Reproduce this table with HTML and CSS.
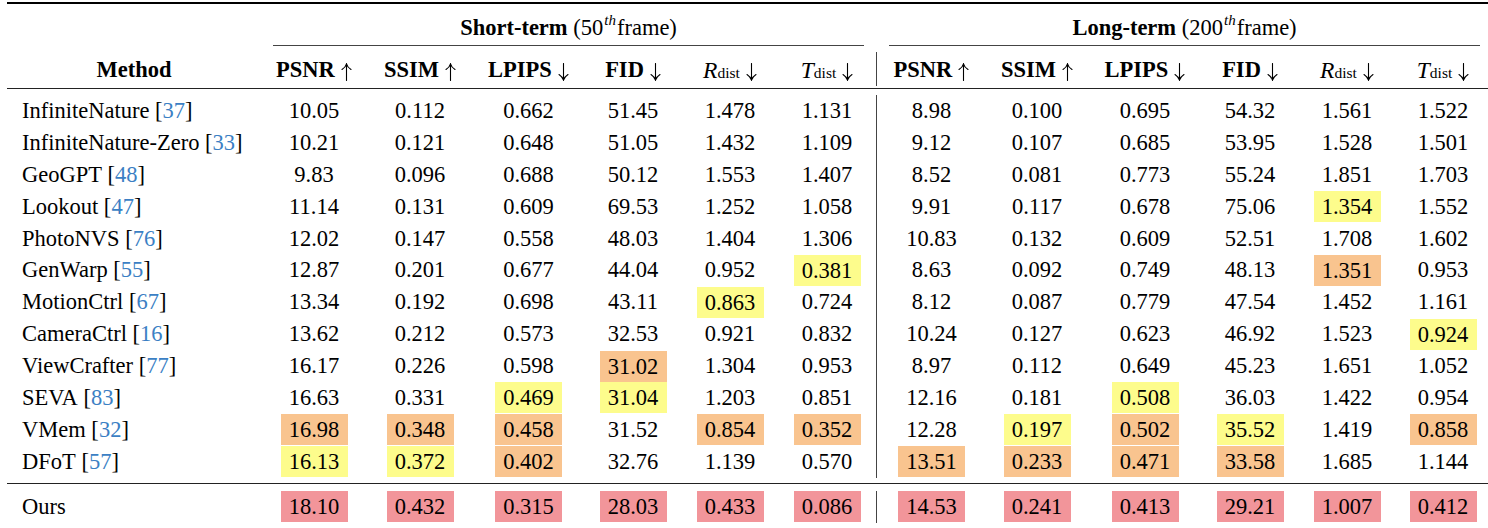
FILE: index.html
```html
<!DOCTYPE html>
<html>
<head>
<meta charset="utf-8">
<title>Comparison table</title>
<link rel="stylesheet" href="styles.css">
</head>
<body>
<div class="tbl">
  <div class="rule top"></div>

  <div class="hblank"></div>
  <div class="group short"><div class="cmid"><b>Short-term</b> (50<sup class="th">th</sup>frame)</div></div>
  <div class="group long"><div class="cmid"><b>Long-term</b> (200<sup class="th">th</sup>frame)</div></div>

  <div class="spacer s6"></div>

  <div class="row head">
    <div class="cell hm"><b>Method</b></div>
    <div class="cell"><b>PSNR</b><svg class="ar" viewBox="0 0 11 18"><path d="M5.5 17.5V1.2M1 6.5Q4.6 4.2 5.5 0.8Q6.4 4.2 10 6.5"/></svg></div>
    <div class="cell"><b>SSIM</b><svg class="ar" viewBox="0 0 11 18"><path d="M5.5 17.5V1.2M1 6.5Q4.6 4.2 5.5 0.8Q6.4 4.2 10 6.5"/></svg></div>
    <div class="cell"><b>LPIPS</b><svg class="ar" viewBox="0 0 11 18"><path d="M5.5 0.5V16.8M1 11.5Q4.6 13.8 5.5 17.2Q6.4 13.8 10 11.5"/></svg></div>
    <div class="cell"><b>FID</b><svg class="ar" viewBox="0 0 11 18"><path d="M5.5 0.5V16.8M1 11.5Q4.6 13.8 5.5 17.2Q6.4 13.8 10 11.5"/></svg></div>
    <div class="cell"><i class="mi">R</i><sub>dist</sub><svg class="ar" viewBox="0 0 11 18"><path d="M5.5 0.5V16.8M1 11.5Q4.6 13.8 5.5 17.2Q6.4 13.8 10 11.5"/></svg></div>
    <div class="cell"><i class="mi">T</i><sub>dist</sub><svg class="ar" viewBox="0 0 11 18"><path d="M5.5 0.5V16.8M1 11.5Q4.6 13.8 5.5 17.2Q6.4 13.8 10 11.5"/></svg></div>
    <div class="cell sep"><b>PSNR</b><svg class="ar" viewBox="0 0 11 18"><path d="M5.5 17.5V1.2M1 6.5Q4.6 4.2 5.5 0.8Q6.4 4.2 10 6.5"/></svg></div>
    <div class="cell"><b>SSIM</b><svg class="ar" viewBox="0 0 11 18"><path d="M5.5 17.5V1.2M1 6.5Q4.6 4.2 5.5 0.8Q6.4 4.2 10 6.5"/></svg></div>
    <div class="cell"><b>LPIPS</b><svg class="ar" viewBox="0 0 11 18"><path d="M5.5 0.5V16.8M1 11.5Q4.6 13.8 5.5 17.2Q6.4 13.8 10 11.5"/></svg></div>
    <div class="cell"><b>FID</b><svg class="ar" viewBox="0 0 11 18"><path d="M5.5 0.5V16.8M1 11.5Q4.6 13.8 5.5 17.2Q6.4 13.8 10 11.5"/></svg></div>
    <div class="cell"><i class="mi">R</i><sub>dist</sub><svg class="ar" viewBox="0 0 11 18"><path d="M5.5 0.5V16.8M1 11.5Q4.6 13.8 5.5 17.2Q6.4 13.8 10 11.5"/></svg></div>
    <div class="cell"><i class="mi">T</i><sub>dist</sub><svg class="ar" viewBox="0 0 11 18"><path d="M5.5 0.5V16.8M1 11.5Q4.6 13.8 5.5 17.2Q6.4 13.8 10 11.5"/></svg></div>
  </div>

  <div class="spacer s2"></div>
  <div class="rule mid"></div>
  <div class="spacer s6"></div>

  <div class="row">
    <div class="cell m">InfiniteNature&nbsp;[<span class="cite">37</span>]</div>
    <div class="cell">10.05</div><div class="cell">0.112</div><div class="cell">0.662</div><div class="cell">51.45</div><div class="cell">1.478</div><div class="cell">1.131</div>
    <div class="cell sep">8.98</div><div class="cell">0.100</div><div class="cell">0.695</div><div class="cell">54.32</div><div class="cell">1.561</div><div class="cell">1.522</div>
  </div>
  <div class="row">
    <div class="cell m">InfiniteNature-Zero&nbsp;[<span class="cite">33</span>]</div>
    <div class="cell">10.21</div><div class="cell">0.121</div><div class="cell">0.648</div><div class="cell">51.05</div><div class="cell">1.432</div><div class="cell">1.109</div>
    <div class="cell sep">9.12</div><div class="cell">0.107</div><div class="cell">0.685</div><div class="cell">53.95</div><div class="cell">1.528</div><div class="cell">1.501</div>
  </div>
  <div class="row">
    <div class="cell m">GeoGPT&nbsp;[<span class="cite">48</span>]</div>
    <div class="cell">9.83</div><div class="cell">0.096</div><div class="cell">0.688</div><div class="cell">50.12</div><div class="cell">1.553</div><div class="cell">1.407</div>
    <div class="cell sep">8.52</div><div class="cell">0.081</div><div class="cell">0.773</div><div class="cell">55.24</div><div class="cell">1.851</div><div class="cell">1.703</div>
  </div>
  <div class="row">
    <div class="cell m">Lookout&nbsp;[<span class="cite">47</span>]</div>
    <div class="cell">11.14</div><div class="cell">0.131</div><div class="cell">0.609</div><div class="cell">69.53</div><div class="cell">1.252</div><div class="cell">1.058</div>
    <div class="cell sep">9.91</div><div class="cell">0.117</div><div class="cell">0.678</div><div class="cell">75.06</div><div class="cell"><span class="hl y">1.354</span></div><div class="cell">1.552</div>
  </div>
  <div class="row">
    <div class="cell m">PhotoNVS&nbsp;[<span class="cite">76</span>]</div>
    <div class="cell">12.02</div><div class="cell">0.147</div><div class="cell">0.558</div><div class="cell">48.03</div><div class="cell">1.404</div><div class="cell">1.306</div>
    <div class="cell sep">10.83</div><div class="cell">0.132</div><div class="cell">0.609</div><div class="cell">52.51</div><div class="cell">1.708</div><div class="cell">1.602</div>
  </div>
  <div class="row">
    <div class="cell m">GenWarp&nbsp;[<span class="cite">55</span>]</div>
    <div class="cell">12.87</div><div class="cell">0.201</div><div class="cell">0.677</div><div class="cell">44.04</div><div class="cell">0.952</div><div class="cell"><span class="hl y">0.381</span></div>
    <div class="cell sep">8.63</div><div class="cell">0.092</div><div class="cell">0.749</div><div class="cell">48.13</div><div class="cell"><span class="hl o">1.351</span></div><div class="cell">0.953</div>
  </div>
  <div class="row">
    <div class="cell m">MotionCtrl&nbsp;[<span class="cite">67</span>]</div>
    <div class="cell">13.34</div><div class="cell">0.192</div><div class="cell">0.698</div><div class="cell">43.11</div><div class="cell"><span class="hl y">0.863</span></div><div class="cell">0.724</div>
    <div class="cell sep">8.12</div><div class="cell">0.087</div><div class="cell">0.779</div><div class="cell">47.54</div><div class="cell">1.452</div><div class="cell">1.161</div>
  </div>
  <div class="row">
    <div class="cell m">CameraCtrl&nbsp;[<span class="cite">16</span>]</div>
    <div class="cell">13.62</div><div class="cell">0.212</div><div class="cell">0.573</div><div class="cell">32.53</div><div class="cell">0.921</div><div class="cell">0.832</div>
    <div class="cell sep">10.24</div><div class="cell">0.127</div><div class="cell">0.623</div><div class="cell">46.92</div><div class="cell">1.523</div><div class="cell"><span class="hl y">0.924</span></div>
  </div>
  <div class="row">
    <div class="cell m">ViewCrafter&nbsp;[<span class="cite">77</span>]</div>
    <div class="cell">16.17</div><div class="cell">0.226</div><div class="cell">0.598</div><div class="cell"><span class="hl o">31.02</span></div><div class="cell">1.304</div><div class="cell">0.953</div>
    <div class="cell sep">8.97</div><div class="cell">0.112</div><div class="cell">0.649</div><div class="cell">45.23</div><div class="cell">1.651</div><div class="cell">1.052</div>
  </div>
  <div class="row">
    <div class="cell m">SEVA&nbsp;[<span class="cite">83</span>]</div>
    <div class="cell">16.63</div><div class="cell">0.331</div><div class="cell"><span class="hl y">0.469</span></div><div class="cell"><span class="hl y">31.04</span></div><div class="cell">1.203</div><div class="cell">0.851</div>
    <div class="cell sep">12.16</div><div class="cell">0.181</div><div class="cell"><span class="hl y">0.508</span></div><div class="cell">36.03</div><div class="cell">1.422</div><div class="cell">0.954</div>
  </div>
  <div class="row">
    <div class="cell m">VMem&nbsp;[<span class="cite">32</span>]</div>
    <div class="cell"><span class="hl o">16.98</span></div><div class="cell"><span class="hl o">0.348</span></div><div class="cell"><span class="hl o">0.458</span></div><div class="cell">31.52</div><div class="cell"><span class="hl o">0.854</span></div><div class="cell"><span class="hl o">0.352</span></div>
    <div class="cell sep">12.28</div><div class="cell"><span class="hl y">0.197</span></div><div class="cell"><span class="hl o">0.502</span></div><div class="cell"><span class="hl y">35.52</span></div><div class="cell">1.419</div><div class="cell"><span class="hl o">0.858</span></div>
  </div>
  <div class="row">
    <div class="cell m">DFoT&nbsp;[<span class="cite">57</span>]</div>
    <div class="cell"><span class="hl y">16.13</span></div><div class="cell"><span class="hl y">0.372</span></div><div class="cell"><span class="hl o">0.402</span></div><div class="cell">32.76</div><div class="cell">1.139</div><div class="cell">0.570</div>
    <div class="cell sep"><span class="hl o">13.51</span></div><div class="cell"><span class="hl o">0.233</span></div><div class="cell"><span class="hl o">0.471</span></div><div class="cell"><span class="hl o">33.58</span></div><div class="cell">1.685</div><div class="cell">1.144</div>
  </div>

  <div class="spacer s5"></div>
  <div class="rule mid"></div>
  <div class="spacer s7"></div>

  <div class="row ours">
    <div class="cell m">Ours</div>
    <div class="cell"><span class="hl r">18.10</span></div><div class="cell"><span class="hl r">0.432</span></div><div class="cell"><span class="hl r">0.315</span></div><div class="cell"><span class="hl r">28.03</span></div><div class="cell"><span class="hl r">0.433</span></div><div class="cell"><span class="hl r">0.086</span></div>
    <div class="cell sep"><span class="hl r">14.53</span></div><div class="cell"><span class="hl r">0.241</span></div><div class="cell"><span class="hl r">0.413</span></div><div class="cell"><span class="hl r">29.21</span></div><div class="cell"><span class="hl r">1.007</span></div><div class="cell"><span class="hl r">0.412</span></div>
  </div>
</div>
</body>
</html>
```

FILE: styles.css
```css
html, body {
  margin: 0;
  padding: 0;
  background: #fff;
  overflow: hidden;
}

.tbl {
  display: grid;
  grid-template-columns: 254px 106px 106px 111px 98px 96px 98px 110px 102px 114px 96px 98px 94px;
  margin: 2px 0 0 7px;
  font-family: "Liberation Serif", "Times New Roman", serif;
  font-size: 22.5px;
  color: #000;
}

.row {
  display: contents;
}

.rule,
.spacer {
  grid-column: 1 / -1;
}

.rule.top {
  height: 2px;
  background: #000;
}

.rule.mid {
  height: 1px;
  background: #222;
}

.s2 { height: 2px; }
.s5 { height: 5px; }
.s6 { height: 6px; }
.s7 { height: 7px; }

.hblank {
  height: 42px;
}

.group {
  grid-column: span 6;
  height: 42px;
  display: flex;
  align-items: flex-end;
}

.cmid {
  flex: 1;
  margin: 0 12px;
  padding-bottom: 4px;
  border-bottom: 1px solid #444;
  text-align: center;
  line-height: 26px;
  white-space: nowrap;
}

.long .cmid {
  margin: 0 10px 0 13px;
}

.th {
  font-style: italic;
  font-size: 15px;
  line-height: 0;
  vertical-align: 10px;
  margin-left: 1px;
  margin-right: 1px;
}

.cell {
  display: flex;
  align-items: center;
  justify-content: center;
  height: 31.9px;
  white-space: nowrap;
}

.head .cell {
  height: 34px;
  align-items: baseline;
  padding-top: 5px;
  box-sizing: border-box;
}

.ours .cell {
  height: 32px;
}

.m {
  justify-content: flex-start;
  padding-left: 15px;
}

.sep {
  border-left: 1px solid #444;
}

.mi {
  font-size: 23.5px;
}

.ar {
  width: 11px;
  height: 18px;
  margin-left: 6px;
  align-self: center;
  position: relative;
  top: 0;
  fill: none;
  stroke: #000;
  stroke-width: 1.1;
  stroke-linecap: round;
}

sub {
  font-size: 15.5px;
  line-height: 0;
  vertical-align: -4px;
}

.cite {
  color: #3b7fc4;
}

.hl {
  display: inline-block;
  width: 67px;
  height: 31px;
  line-height: 31px;
  text-align: center;
}

.o { background: #f9c48f; }
.y { background: #fdfc8c; }
.r { background: #f2959a; }
```
